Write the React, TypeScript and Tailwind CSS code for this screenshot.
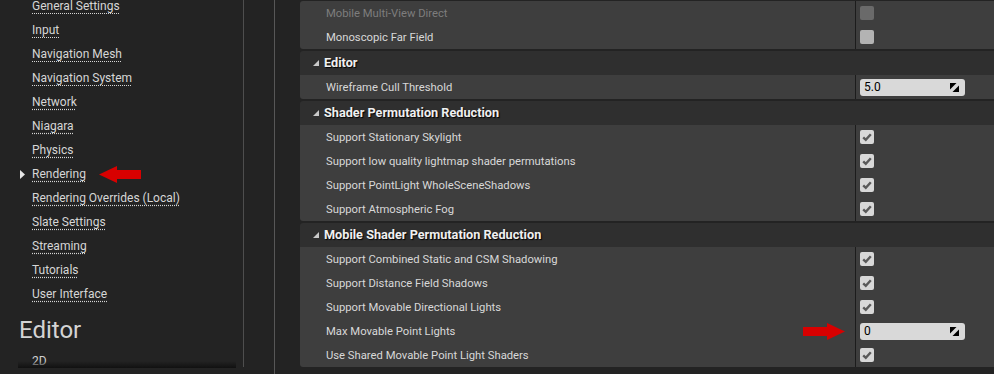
import React from 'react'

const navItems = [
  'General Settings',
  'Input',
  'Navigation Mesh',
  'Navigation System',
  'Network',
  'Niagara',
  'Physics',
  'Rendering',
  'Rendering Overrides (Local)',
  'Slate Settings',
  'Streaming',
  'Tutorials',
  'User Interface',
]

type Value = { kind: 'check'; checked: boolean; disabled?: boolean } | { kind: 'number'; value: string }

type RowDef = { label: string; value: Value; disabled?: boolean; marker?: boolean }

const sections: { title?: string; rows: RowDef[] }[] = [
  {
    rows: [
      { label: 'Mobile Multi-View Direct', disabled: true, value: { kind: 'check', checked: false, disabled: true } },
      { label: 'Monoscopic Far Field', value: { kind: 'check', checked: false } },
    ],
  },
  {
    title: 'Editor',
    rows: [{ label: 'Wireframe Cull Threshold', value: { kind: 'number', value: '5.0' } }],
  },
  {
    title: 'Shader Permutation Reduction',
    rows: [
      { label: 'Support Stationary Skylight', value: { kind: 'check', checked: true } },
      { label: 'Support low quality lightmap shader permutations', value: { kind: 'check', checked: true } },
      { label: 'Support PointLight WholeSceneShadows', value: { kind: 'check', checked: true } },
      { label: 'Support Atmospheric Fog', value: { kind: 'check', checked: true } },
    ],
  },
  {
    title: 'Mobile Shader Permutation Reduction',
    rows: [
      { label: 'Support Combined Static and CSM Shadowing', value: { kind: 'check', checked: true } },
      { label: 'Support Distance Field Shadows', value: { kind: 'check', checked: true } },
      { label: 'Support Movable Directional Lights', value: { kind: 'check', checked: true } },
      { label: 'Max Movable Point Lights', value: { kind: 'number', value: '0' }, marker: true },
      { label: 'Use Shared Movable Point Light Shaders', value: { kind: 'check', checked: true } },
    ],
  },
]

function RedArrow({ dir }: { dir: 'left' | 'right' }) {
  return (
    <svg width="42" height="17" viewBox="0 0 42 17" className={dir === 'right' ? 'scale-x-[-1]' : ''}>
      <rect x="17" y="4" width="25" height="9" fill="#d80000" />
      <polygon points="0,8.5 18,0 18,17" fill="#d80000" />
    </svg>
  )
}

function Checkbox({ checked, disabled }: { checked: boolean; disabled?: boolean }) {
  const bg = disabled ? 'bg-[#6a6a6a]' : checked ? 'bg-[#d8d8d8]' : 'bg-[#b3b3b3]'
  return (
    <div className={`w-[14px] h-[14px] rounded-[2px] flex items-center justify-center ${bg}`}>
      {checked && (
        <svg width="12" height="12" viewBox="0 0 12 12">
          <path d="M2.2 6.3 L4.8 8.8 L9.8 3.2" fill="none" stroke="#5a5a5a" strokeWidth="2.4" />
        </svg>
      )}
    </div>
  )
}

function NumberBox({ value }: { value: string }) {
  return (
    <div className="w-[105px] h-[17px] rounded-[3px] bg-[#d9d9d9] flex items-center justify-between pl-[4px] pr-[6px] text-[12px] text-black">
      <span>{value}</span>
      <svg width="9" height="9" viewBox="0 0 9 9">
        <polygon points="0,0 6.5,0 0,6.5" fill="#000" />
        <polygon points="9,2.5 9,9 2.5,9" fill="#000" />
      </svg>
    </div>
  )
}

function Row({ row }: { row: RowDef }) {
  return (
    <div className="flex h-[24px] bg-[#3e3e3e]">
      <div className="w-[555px] flex items-center justify-between pl-[26px] pr-[10px]">
        <span className={`pt-[2px] text-[11.25px] ${row.disabled ? 'text-[#7d7d7d]' : 'text-[#d8d8d8]'}`}>{row.label}</span>
        {row.marker && <RedArrow dir="right" />}
      </div>
      <div className="w-px bg-[#1c1c1c]" />
      <div className="flex items-center pl-[4px]">
        {row.value.kind === 'check' ? (
          <Checkbox checked={row.value.checked} disabled={row.value.disabled} />
        ) : (
          <NumberBox value={row.value.value} />
        )}
      </div>
    </div>
  )
}

function Section({ title, rows }: { title?: string; rows: RowDef[] }) {
  return (
    <div className="rounded-l-[3px] overflow-hidden">
      {title && (
        <div className="h-[24px] bg-[#2f2f2f] flex items-center pl-[13px] gap-[5px]">
          <svg width="6" height="6" viewBox="0 0 6 6">
            <polygon points="6,0 6,6 0,6" fill="#c9c9c9" />
          </svg>
          <span className="text-[12.7px] font-bold text-[#f0f0f0] [text-shadow:1px_1px_1px_#000]">{title}</span>
        </div>
      )}
      {rows.map(r => (
        <Row key={r.label} row={r} />
      ))}
    </div>
  )
}

export default function App() {
  return (
    <div className="w-[994px] h-[374px] bg-[#232323] flex overflow-hidden font-['Roboto',sans-serif]">
      <aside className="relative w-[243px] h-[368px] overflow-hidden">
        <div className="-mt-[6px] flex flex-col">
          {navItems.map(name => (
            <div key={name} className="relative h-[24px] flex items-center pl-[32px]">
              {name === 'Rendering' && (
                <svg width="5" height="9" viewBox="0 0 5 9" className="absolute left-[20px] top-[8px]">
                  <polygon points="0,0 5,4.5 0,9" fill="#e6e6e6" />
                </svg>
              )}
              <span className="text-[12px] text-[#d6d6d6] underline decoration-dotted decoration-[#d6d6d6] underline-offset-[3px]">
                {name}
              </span>
              {name === 'Rendering' && (
                <span className="ml-[13px] flex">
                  <RedArrow dir="left" />
                </span>
              )}
            </div>
          ))}
          <div className="h-[43px] pl-[19px] pt-[10px] text-[24px] leading-[29px] text-[#d4d4d4]">Editor</div>
          <div className="h-[24px] flex items-center pl-[32px] text-[12px] text-[#cfcfcf]">2D</div>
        </div>
        <div className="absolute left-[18px] right-[7px] bottom-0 h-[7px] bg-gradient-to-t from-[#111] to-transparent" />
      </aside>
      <div className="w-px h-[367px] bg-[#4e4e4e]" />
      <div className="w-[30px]" />
      <div className="w-px bg-[#575757]" />
      <div className="w-[25px]" />
      <main className="flex-1 flex flex-col gap-[2px] pt-[1px]">
        {sections.map((s, i) => (
          <Section key={i} title={s.title} rows={s.rows} />
        ))}
      </main>
    </div>
  )
}
